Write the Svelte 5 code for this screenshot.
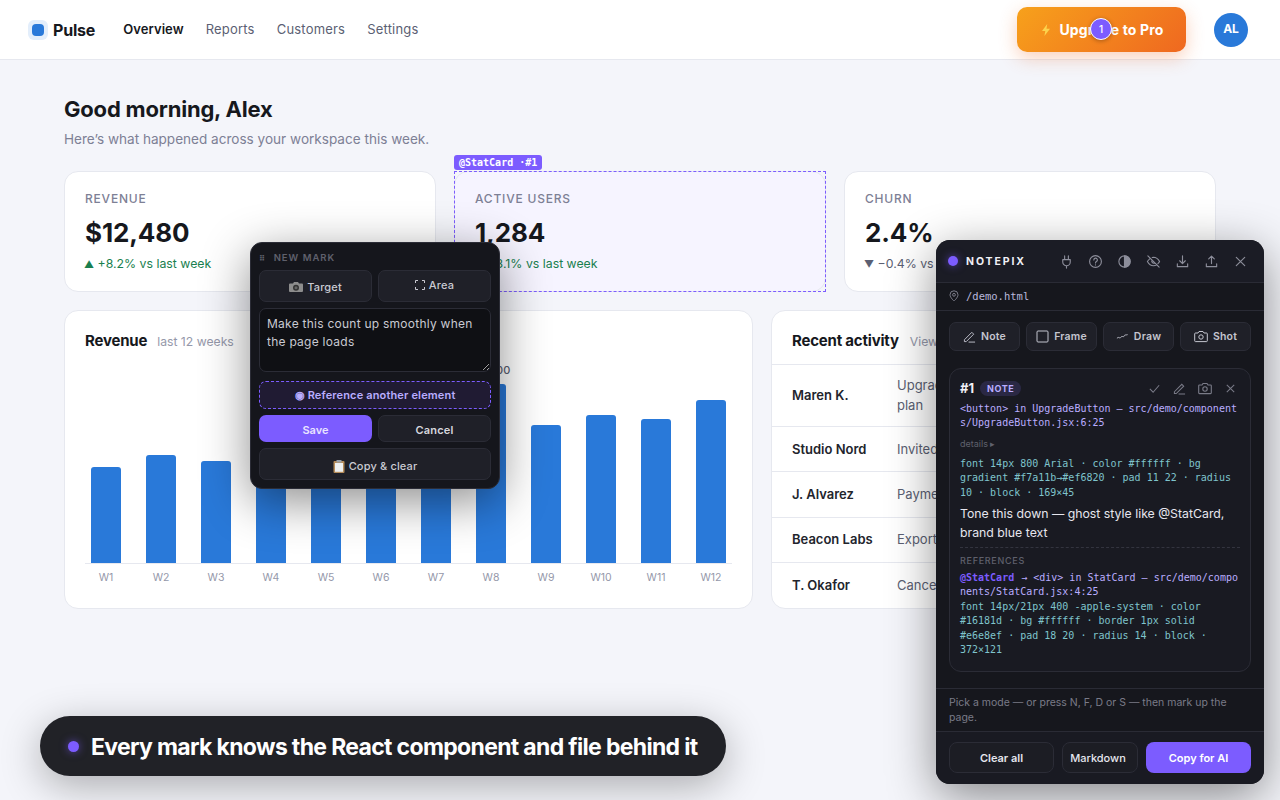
<script lang="ts">
	const nav = ['Overview', 'Reports', 'Customers', 'Settings'];

	const stats = [
		{ label: 'Revenue', value: '$12,480', delta: '+8.2% vs last week', up: true, marked: false },
		{ label: 'Active users', value: '1,284', delta: '+3.1% vs last week', up: true, marked: true },
		{ label: 'Churn', value: '2.4%', delta: '−0.4% vs last week', up: false, marked: false }
	];

	const bars = [96, 108, 102, 118, 128, 122, 140, 179, 138, 148, 144, 163];

	const activity = [
		{ name: 'Maren K.', what: 'Upgraded to Pro plan', when: '2m ago' },
		{ name: 'Studio Nord', what: 'Invited 3 teammates', when: '18m ago' },
		{ name: 'J. Alvarez', what: 'Payment received', when: '1h ago' },
		{ name: 'Beacon Labs', what: 'Export finished', when: '3h ago' },
		{ name: 'T. Okafor', what: 'Cancelled trial', when: '5h ago' }
	];

	const tools = [
		// plug
		'M6 2v4M10 2v4M4 6h8v2.500a4 4 0 0 1-8 0zM8 12.500V15',
		// help and contrast are drawn in the markup
		'',
		'',
		// eye off
		'M2 2l12 12M6.600 3.700A6.500 6.500 0 0 1 8 3.500c4 0 6.500 4.500 6.500 4.500a11 11 0 0 1-1.800 2.300M4.300 4.900A10.500 10.500 0 0 0 1.500 8S4 12.500 8 12.500a6.500 6.500 0 0 0 3.400-1M6.600 6.600a2 2 0 0 0 2.800 2.800',
		// download
		'M8 2v8M5 7.200 8 10.200l3-3M2.500 10.500v3h11v-3',
		// upload
		'M8 10.200v-8M5 5.200 8 2.200l3 3M2.500 10.500v3h11v-3',
		// close
		'M3.500 3.500l9 9M12.500 3.500l-9 9'
	];
</script>

<div class="page">
	<header class="topbar">
		<div class="brand">
			<span class="logo"><span></span></span>
			<strong>Pulse</strong>
		</div>
		<nav>
			{#each nav as item, i}
				<span class:current={i === 0}>{item}</span>
			{/each}
		</nav>
		<div class="spacer"></div>
		<button class="upgrade">
			<svg width="14" height="14" viewBox="0 0 14 14"><path d="M8.200 1 3 8h3.300l-.9 5L11 5.800H7.500z" fill="#fcd34d" /></svg>
			Upgrade to Pro
			<span class="pin">1</span>
		</button>
		<span class="avatar">AL</span>
	</header>

	<main>
		<h1>Good morning, Alex</h1>
		<p class="lead">Here’s what happened across your workspace this week.</p>

		<section class="stats">
			{#each stats as s}
				<div class="card stat" class:marked={s.marked}>
					{#if s.marked}<span class="tag">@StatCard ·#1</span>{/if}
					<div class="stat-label">{s.label}</div>
					<div class="stat-value">{s.value}</div>
					<div class="stat-delta" class:down={!s.up}>
						<span class="arrow">{s.up ? '▲' : '▼'}</span>
						{s.delta}
					</div>
				</div>
			{/each}
		</section>

		<section class="lower">
			<div class="card chart">
				<div class="card-head">
					<h2>Revenue</h2>
					<span>last 12 weeks</span>
				</div>
				<div class="plot">
					{#each bars as h, i}
						<div class="col">
							{#if i === 7}<span class="bar-value">$9,400</span>{/if}
							<div class="bar" style="height: {h}px"></div>
						</div>
					{/each}
				</div>
				<div class="weeks">
					{#each bars as _, i}
						<span>W{i + 1}</span>
					{/each}
				</div>
			</div>

			<div class="card recent">
				<div class="card-head recent-head">
					<h2>Recent activity</h2>
					<span>View all</span>
				</div>
				{#each activity as row}
					<div class="row">
						<b>{row.name}</b>
						<span class="what">{row.what}</span>
						<span class="when">{row.when}</span>
					</div>
				{/each}
			</div>
		</section>
	</main>

	<div class="popover">
		<div class="pop-head"><i>⠿</i> NEW MARK</div>
		<div class="pair">
			<button class="dark target">
				<svg width="14" height="12" viewBox="0 0 14 12"><path d="M1 2.500h3l1-1.500h4l1 1.500h3a1 1 0 0 1 1 1V10a1 1 0 0 1-1 1H1a1 1 0 0 1-1-1V3.500a1 1 0 0 1 1-1z" fill="#8d8d8d" /><circle cx="7" cy="6.700" r="3" fill="#333" /><circle cx="7" cy="6.700" r="1.500" fill="#666" /></svg>
				Target
			</button>
			<button class="dark area">
				<svg width="10" height="10" viewBox="0 0 10 10" fill="none" stroke="#c8c8d0"><path d="M.5 3V.5H3M7 .5h2.500V3M9.500 7v2.500H7M3 9.500H.5V7" /></svg>
				Area
			</button>
		</div>
		<textarea readonly>Make this count up smoothly when the page loads</textarea>
		<button class="ref">◉ Reference another element</button>
		<div class="pair">
			<button class="save">Save</button>
			<button class="dark cancel">Cancel</button>
		</div>
		<button class="dark copy">
			<svg width="12" height="13" viewBox="0 0 12 13"><rect x=".5" y="1" width="11" height="12" rx="1" fill="#b58c5a" /><rect x="2" y="3" width="8" height="8.800" fill="#eceff1" /><rect x="3.500" y="0" width="5" height="2.500" fill="#9aa0a8" /></svg>
			Copy &amp; clear
		</button>
	</div>

	<aside class="panel">
		<div class="panel-head">
			<span class="dot"></span>
			<span class="panel-name">NOTEPIX</span>
			<div class="head-tools">
				{#each tools as d, i}
					<svg width="15" height="15" viewBox="0 0 16 16" fill="none" stroke="#8d8e9b" stroke-width="1.200" stroke-linecap="round" stroke-linejoin="round">
						{#if i === 1}
							<circle cx="8" cy="8" r="6.300" />
							<path d="M6.200 6.300a1.900 1.900 0 1 1 2.800 1.700c-.7.400-1 .8-1 1.500M8 11.500v.1" />
						{:else if i === 2}
							<circle cx="8" cy="8" r="6" />
							<path d="M8 2a6 6 0 0 1 0 12z" fill="#8d8e9b" />
						{:else}
							<path {d} />
						{/if}
					</svg>
				{/each}
			</div>
		</div>
		<div class="path">
			<svg width="12" height="12" viewBox="0 0 12 12" fill="none" stroke="#7a7b88"><path d="M6 11S2 7.500 2 4.800a4 4 0 0 1 8 0C10 7.500 6 11 6 11z" /><circle cx="6" cy="4.800" r="1.400" /></svg>
			/demo.html
		</div>

		<div class="modes">
			<button>
				<svg width="13" height="13" viewBox="0 0 14 14" fill="none" stroke="#c4c5cf"><path d="M1.500 10.500 9.500 2.500l2 2-8 8h-2zM6 13h7" /></svg>
				Note
			</button>
			<button>
				<svg width="13" height="13" viewBox="0 0 13 13" fill="none" stroke="#c4c5cf"><rect x="1" y="1" width="11" height="11" rx="1" /></svg>
				Frame
			</button>
			<button>
				<svg width="13" height="13" viewBox="0 0 14 14" fill="none" stroke="#c4c5cf"><path d="M1 9c1.500-1.500 2-1 3-.5s1.500-2 3-1.500 1.500 0 2-1 2-.5 3.500-1" /></svg>
				Draw
			</button>
			<button>
				<svg width="14" height="13" viewBox="0 0 14 13" fill="none" stroke="#c4c5cf"><path d="M1.500 3h2.500l1-1.500h4L10 3h2.500a.8.800 0 0 1 .8.800v7a.8.800 0 0 1-.8.800h-11a.8.800 0 0 1-.8-.8v-7a.8.800 0 0 1 .8-.8z" /><circle cx="7" cy="7" r="2.200" /></svg>
				Shot
			</button>
		</div>

		<div class="mark">
			<div class="mark-head">
				<b>#1</b>
				<span class="kind">NOTE</span>
				<div class="mark-tools">
					<svg width="13" height="13" viewBox="0 0 14 14" fill="none" stroke="#7a7b88" stroke-width="1.100"><path d="M2 7.500 5.500 11 12 3.500" /></svg>
					<svg width="13" height="13" viewBox="0 0 14 14" fill="none" stroke="#7a7b88" stroke-width="1.100"><path d="M1.500 10.500 9.500 2.500l2 2-8 8h-2zM6 13h7" /></svg>
					<svg width="14" height="13" viewBox="0 0 14 13" fill="none" stroke="#7a7b88" stroke-width="1.100"><path d="M1.500 3h2.500l1-1.500h4L10 3h2.500a.8.800 0 0 1 .8.800v7a.8.800 0 0 1-.8.800h-11a.8.800 0 0 1-.8-.8v-7a.8.800 0 0 1 .8-.8z" /><circle cx="7" cy="7" r="2.200" /></svg>
					<svg width="13" height="13" viewBox="0 0 14 14" fill="none" stroke="#7a7b88" stroke-width="1.100"><path d="M3 3l8 8M11 3l-8 8" /></svg>
				</div>
			</div>
			<div class="mono src">&lt;button&gt; in UpgradeButton — src/demo/component<br />s/UpgradeButton.jsx:6:25</div>
			<div class="details">details ▸</div>
			<div class="mono css">font 14px 800 Arial · color #ffffff · bg gradient #f7a11b→#ef6820 · pad 11 22 · radius 10 · block · 169×45</div>
			<p class="note">Tone this down — ghost style like @StatCard, brand blue text</p>
			<div class="refs">
				<div class="refs-title">REFERENCES</div>
				<div class="mono src"><em>@StatCard</em> → &lt;div&gt; in StatCard — src/demo/compo<br />nents/StatCard.jsx:4:25</div>
				<div class="mono css">font 14px/21px 400 -apple-system · color #16181d · bg #ffffff · border 1px solid #e6e8ef · pad 18 20 · radius 14 · block · 372×121</div>
			</div>
		</div>

		<div class="spacer"></div>
		<p class="hint">Pick a mode — or press N, F, D or S — then mark up the page.</p>
		<div class="panel-foot">
			<button class="clear">Clear all</button>
			<button class="md">Markdown</button>
			<button class="ai">Copy for AI</button>
		</div>
	</aside>

	<div class="toast">
		<span class="dot"></span>
		<span class="toast-text">Every mark knows the React component and file behind it</span>
	</div>
</div>

<style>
	:global(body) {
		margin: 0;
		background: #f4f5fa;
	}

	.page {
		position: relative;
		width: 1280px;
		height: 800px;
		overflow: hidden;
		font-family: Inter, 'Liberation Sans', sans-serif;
		color: #16181d;
	}

	button {
		font-family: inherit;
		border: 0;
		padding: 0;
	}

	.spacer {
		flex: 1;
	}

	.topbar {
		height: 59px;
		display: flex;
		align-items: center;
		padding: 0 32px 0 28px;
		background: #fff;
		border-bottom: 1px solid #e6e8ef;
	}

	.brand {
		display: flex;
		align-items: center;
		gap: 5px;
		font-size: 16px;
	}

	.brand strong {
		font-weight: 700;
		letter-spacing: -0.2px;
	}

	.logo {
		width: 20px;
		height: 20px;
		border-radius: 6px;
		background: #e3eefb;
		display: flex;
		align-items: center;
		justify-content: center;
	}

	.logo span {
		width: 12px;
		height: 12px;
		border-radius: 4px;
		background: #2979d9;
	}

	nav {
		display: flex;
		gap: 22px;
		margin-left: 28px;
		font-size: 13px;
		font-weight: 400;
		letter-spacing: 0.2px;
		color: #5b5f73;
		margin-top: -1px;
	}

	nav .current {
		color: #16181d;
		font-weight: 600;
		letter-spacing: 0.08px;
	}

	.upgrade {
		position: relative;
		width: 169px;
		height: 45px;
		margin-right: 28px;
		display: flex;
		align-items: center;
		justify-content: center;
		gap: 6px;
		border-radius: 10px;
		background: linear-gradient(135deg, #f7a11b, #ef6820);
		box-shadow: 0 6px 18px rgba(239, 104, 32, 0.3);
		color: #fff;
		font-size: 14px;
		font-weight: 700;
		letter-spacing: 0.15px;
	}

	.pin {
		position: absolute;
		left: 73px;
		top: 11px;
		width: 20px;
		height: 20px;
		border: 1px solid #fff;
		border-radius: 50%;
		background: #7c5cff;
		box-shadow: 0 1px 4px rgba(0, 0, 0, 0.3);
		font-size: 10px;
		font-weight: 500;
		letter-spacing: 0;
		line-height: 20px;
		text-align: center;
	}

	.avatar {
		width: 34px;
		height: 34px;
		border-radius: 50%;
		background: #2979d9;
		color: #fff;
		font-size: 12px;
		font-weight: 700;
		line-height: 31px;
		text-align: center;
	}

	main {
		padding: 35px 64px 0;
	}

	h1 {
		margin: 0;
		font-size: 22px;
		line-height: 29px;
		font-weight: 700;
		letter-spacing: -0.2px;
	}

	.lead {
		margin: 5px 0 0;
		font-size: 13.570px;
		line-height: 21px;
		color: #7d8095;
	}

	.stats {
		display: grid;
		grid-template-columns: repeat(3, 372px);
		gap: 18px;
		margin-top: 21px;
	}

	.card {
		background: #fff;
		border: 1px solid #e6e8ef;
		border-radius: 14px;
		box-sizing: border-box;
	}

	.stat {
		position: relative;
		height: 121px;
		padding: 18px 20px;
	}

	.stat.marked {
		background: #f6f4ff;
	}

	.stat.marked::after {
		content: '';
		position: absolute;
		inset: -1px;
		border: 1px dashed #7c5cff;
	}

	.tag {
		position: absolute;
		left: -1px;
		top: -17px;
		height: 15px;
		padding: 0 5px;
		border-radius: 3px;
		background: #7c5cff;
		color: #fff;
		font-family: 'DejaVu Sans Mono', monospace;
		font-size: 10px;
		font-weight: 700;
		line-height: 15px;
		white-space: nowrap;
	}

	.stat-label {
		font-size: 12px;
		line-height: 18px;
		font-weight: 500;
		letter-spacing: 0.8px;
		text-transform: uppercase;
		color: #7d8095;
	}

	.stat-value {
		margin-top: 8px;
		font-size: 26px;
		line-height: 34px;
		font-weight: 700;
		letter-spacing: -0.13px;
	}

	.stat-delta {
		margin-top: 4px;
		font-size: 12.300px;
		line-height: 19px;
		color: #1a7f4f;
	}

	.stat-delta.down {
		color: #5b5f73;
	}

	.arrow {
		font-size: 10px;
		margin-left: -1px;
	}

	.lower {
		display: grid;
		grid-template-columns: 689px 445px;
		gap: 18px;
		margin-top: 18px;
	}

	.chart {
		height: 299px;
		padding: 18px 20px 0;
	}

	.card-head {
		display: flex;
		align-items: baseline;
		gap: 10px;
	}

	.card-head h2 {
		margin: 0;
		font-size: 15px;
		line-height: 24px;
		font-weight: 700;
		letter-spacing: -0.2px;
	}

	.card-head span {
		font-size: 12.200px;
		color: #9598aa;
	}

	.plot {
		height: 210px;
		display: grid;
		grid-template-columns: repeat(12, 42px);
		column-gap: 13px;
		align-items: end;
		border-bottom: 1px solid #e6e8ef;
	}

	.col {
		position: relative;
		display: flex;
		justify-content: center;
	}

	.bar {
		width: 30px;
		border-radius: 3px 3px 0 0;
		background: #2979d9;
	}

	.bar-value {
		position: absolute;
		bottom: 100%;
		margin-bottom: 7px;
		font-size: 11px;
		font-weight: 500;
		color: #5b5f73;
	}

	.weeks {
		display: grid;
		grid-template-columns: repeat(12, 42px);
		column-gap: 13px;
		margin-top: 7px;
		font-size: 10.500px;
		line-height: 13px;
		color: #9598aa;
		text-align: center;
	}

	.recent {
		overflow: hidden;
		height: 299px;
	}

	.recent-head {
		height: 54px;
		box-sizing: border-box;
		padding: 18px 20px 0;
		border-bottom: 1px solid #e6e8ef;
		gap: 11px;
	}

	.row {
		display: grid;
		grid-template-columns: 105px 128px 1fr;
		align-items: center;
		padding: 0 20px 1px;
		min-height: 45.330px;
		box-sizing: border-box;
		border-top: 1px solid #e6e8ef;
		font-size: 13px;
		line-height: 20px;
	}

	.recent-head + .row {
		border-top: 0;
		min-height: 61px;
	}

	.row b {
		font-weight: 600;
		color: #22242c;
	}

	.what {
		color: #5b5f73;
	}

	.when {
		text-align: right;
		color: #9598aa;
		font-size: 12px;
	}

	.popover {
		position: absolute;
		left: 250px;
		top: 242px;
		width: 250px;
		height: 247px;
		box-sizing: border-box;
		padding: 7px 8px 8px;
		display: flex;
		flex-direction: column;
		border: 1px solid #2b2c36;
		border-radius: 12px;
		background: #15161c;
		box-shadow: 0 12px 48px rgba(0, 0, 0, 0.45);
		letter-spacing: 0.1px;
	}

	.pop-head {
		height: 14px;
		font-size: 9.500px;
		line-height: 15px;
		font-weight: 600;
		letter-spacing: 1px;
		color: #5f606c;
	}

	.pop-head i {
		font-style: normal;
		font-size: 8px;
		margin-right: 4px;
		font-family: 'DejaVu Sans', sans-serif;
	}

	.pair {
		display: grid;
		grid-template-columns: 113px 113px;
		gap: 6px;
	}

	.popover .pair:nth-of-type(2) {
		margin-top: 6px;
	}

	.dark {
		display: flex;
		align-items: center;
		justify-content: center;
		gap: 4px;
		border: 1px solid #2b2c36;
		border-radius: 7px;
		background: #1f2028;
		color: #c9cad2;
		font-size: 11px;
		font-weight: 500;
		letter-spacing: 0.15px;
		box-sizing: border-box;
	}

	.target,
	.area {
		height: 32px;
	}

	.target {
		padding-top: 2px;
	}

	.area {
		padding-bottom: 2px;
	}

	textarea {
		display: block;
		width: 100%;
		height: 64px;
		margin: 6px 0 0;
		padding: 6px 7px;
		box-sizing: border-box;
		border: 1px solid #2b2c36;
		border-radius: 7px;
		outline: none;
		background: #0f1014;
		color: #c9cad2;
		font-family: inherit;
		font-size: 12px;
		line-height: 18px;
		letter-spacing: 0.25px;
		resize: vertical;
	}

	.ref {
		height: 29px;
		margin-top: 9px;
		padding-top: 1px;
		border: 1px dashed #7c5cff;
		border-radius: 7px;
		background: #201b33;
		color: #b9adff;
		font-size: 11px;
		font-weight: 600;
		letter-spacing: 0.15px;
	}

	.save,
	.cancel {
		height: 27px;
		margin-top: 6px;
		padding-top: 2px;
		font-size: 11px;
		font-weight: 600;
	}

	.save {
		border-radius: 7px;
		background: #7c5cff;
		color: #e9e4ff;
	}

	.cancel {
		color: #d6d7de;
	}

	.copy {
		height: 32px;
		margin-top: 6px;
		padding-top: 4px;
	}

	.panel {
		position: absolute;
		left: 936px;
		top: 240px;
		width: 328px;
		height: 544px;
		box-sizing: border-box;
		display: flex;
		flex-direction: column;
		border-radius: 14px;
		background: #16171d;
		box-shadow: 0 12px 48px rgba(0, 0, 0, 0.45);
		overflow: hidden;
	}

	.panel-head {
		height: 42px;
		flex: none;
		display: flex;
		align-items: center;
		padding: 0 16px 0 12px;
		border-bottom: 1px solid #2a2b35;
		background: #1b1c25;
	}

	.dot {
		flex: none;
		width: 10px;
		height: 10px;
		border-radius: 50%;
		background: #7c5cff;
		box-shadow: 0 0 8px rgba(124, 92, 255, 0.6);
	}

	.panel-name {
		margin-left: 8px;
		font-size: 10.500px;
		font-weight: 700;
		letter-spacing: 1.900px;
		color: #f0f0f5;
	}

	.head-tools {
		margin-left: auto;
		display: flex;
		gap: 14px;
	}

	.path {
		height: 28px;
		flex: none;
		display: flex;
		align-items: center;
		gap: 6px;
		padding: 0 12px 1px;
		box-sizing: border-box;
		border-bottom: 1px solid #2a2b35;
		color: #b9b7dc;
		font-family: 'DejaVu Sans Mono', monospace;
		font-size: 10.500px;
	}

	.modes {
		flex: none;
		display: grid;
		grid-template-columns: repeat(4, 71px);
		gap: 6px;
		padding: 11px 13px 0;
		height: 57px;
		box-sizing: border-box;
	}

	.modes button {
		height: 29px;
		display: flex;
		align-items: center;
		justify-content: center;
		gap: 5px;
		border: 1px solid #2b2c36;
		border-radius: 7px;
		background: #1f2028;
		color: #c4c5cf;
		font-size: 10.500px;
		font-weight: 600;
		letter-spacing: 0.2px;
	}

	.mark {
		flex: none;
		height: 304px;
		box-sizing: border-box;
		margin: 0 13px;
		padding: 10px 10px;
		border: 1px solid #2b2c36;
		border-radius: 12px;
		background: #191a22;
	}

	.mark-head {
		display: flex;
		align-items: center;
		height: 18px;
	}

	.mark-head b {
		font-size: 13px;
		font-weight: 700;
		color: #f0f0f5;
	}

	.kind {
		margin-left: 6px;
		height: 15px;
		padding: 0 7px;
		border-radius: 8px;
		background: #2a2844;
		color: #b9adff;
		font-size: 9px;
		font-weight: 700;
		letter-spacing: 0.6px;
		line-height: 15px;
	}

	.mark-tools {
		margin-left: auto;
		display: flex;
		align-items: center;
		gap: 12px;
		margin-right: 3px;
	}

	.mono {
		font-family: 'DejaVu Sans Mono', monospace;
		font-size: 10px;
		line-height: 14.400px;
	}

	.src {
		margin-top: 5px;
		color: #b9adff;
		white-space: nowrap;
	}

	.details {
		margin-top: 6px;
		font-size: 9px;
		line-height: 13px;
		color: #5f606c;
	}

	.css {
		margin-top: 7px;
		color: #7fc4cc;
		overflow-wrap: anywhere;
		width: 280px;
	}

	.note {
		margin: 4px 0 0;
		font-size: 12.300px;
		line-height: 19px;
		color: #e6e6ee;
	}

	.refs {
		margin-top: 5px;
		padding-top: 6px;
		border-top: 1px dashed #33343f;
	}

	.refs-title {
		font-size: 9px;
		line-height: 13px;
		font-weight: 500;
		letter-spacing: 0.7px;
		color: #5f606c;
	}

	.refs .src {
		margin-top: 4px;
	}

	.refs .css {
		margin-top: 0;
	}

	em {
		font-style: normal;
		font-weight: 700;
		color: #7c5cff;
		margin-right: 1px;
	}

	.hint {
		flex: none;
		margin: 0;
		padding: 6px 13px;
		border-top: 1px solid #2a2b35;
		border-bottom: 1px solid #2a2b35;
		font-size: 10.500px;
		line-height: 15px;
		color: #7a7b88;
	}

	.panel-foot {
		flex: none;
		height: 52px;
		box-sizing: border-box;
		display: flex;
		gap: 8px;
		padding: 10px 13px;
		background: #191a22;
	}

	.panel-foot button {
		height: 31px;
		border-radius: 8px;
		font-size: 11px;
		font-weight: 600;
	}

	.clear,
	.md {
		border: 1px solid #2b2c36;
		background: #1c1d24;
		color: #e6e6ee;
		box-sizing: border-box;
	}

	.clear {
		width: 105px;
	}

	.panel-foot .md {
		width: 76px;
		font-weight: 500;
		padding-right: 4px;
	}

	.ai {
		width: 105px;
		background: #7c5cff;
		color: #fff;
	}

	.toast {
		position: absolute;
		left: 40px;
		top: 716px;
		width: 686px;
		height: 60px;
		box-sizing: border-box;
		display: flex;
		align-items: center;
		gap: 12px;
		padding-left: 28px;
		border-radius: 30px;
		background: #212227;
		box-shadow: 0 10px 40px rgba(0, 0, 0, 0.3);
		color: #fff;
		font-size: 23px;
		font-weight: 700;
		letter-spacing: -0.67px;
		white-space: nowrap;
	}

	.toast-text {
		padding-top: 1px;
	}

	.toast .dot {
		width: 11px;
		height: 11px;
	}
</style>
